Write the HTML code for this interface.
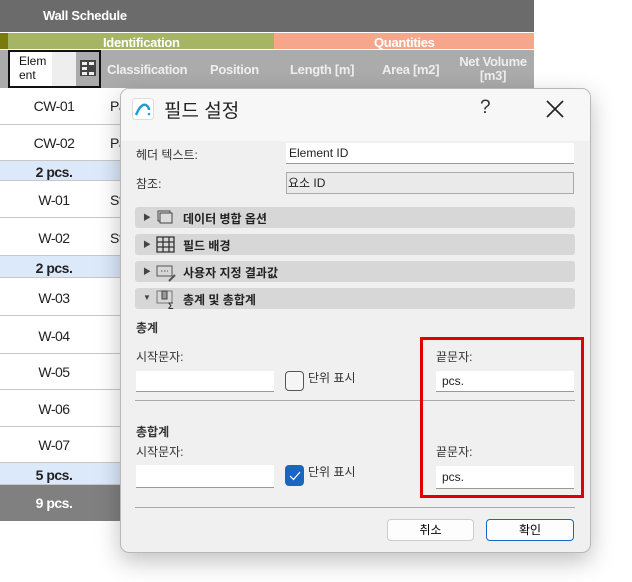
<!DOCTYPE html><html><head><meta charset="utf-8"><style>
*{box-sizing:border-box;margin:0;padding:0}
body{width:632px;height:582px;background:#fff;position:relative;overflow:hidden;font-family:"Liberation Sans","Noto Sans CJK KR",sans-serif}
.a{position:absolute}
.t{font-family:"Liberation Sans",sans-serif;font-weight:bold;color:#fff;font-size:13px;letter-spacing:-0.3px}
.row{position:absolute;left:0;width:534px;border-bottom:1px solid #c8c8c8;font-size:14px;color:#222}
.row span{position:absolute;left:0;width:108px;text-align:center;letter-spacing:-0.5px}
.sum{background:linear-gradient(90deg,#dbe9fb,#dbe9fb 60%,#b9cde6);font-weight:bold}
.lbl{position:absolute;font-size:12px;color:#333}
.inp{position:absolute;background:#fff;border-bottom:1px solid #999;font-size:12px;padding-left:6px;color:#222}
.bar{position:absolute;left:135px;width:440px;height:21px;background:#d7d7d7;border-radius:3px;font-size:12px;font-weight:bold;color:#222}
.bar .tri{position:absolute;left:8px;top:5px;font-size:8px;color:#444}
.bar .tx{position:absolute;left:48px;top:3px}
</style></head><body>
<div class="a" style="left:0;top:0;width:534px;height:32px;background:#6b6b6b"></div>
<div class="a t" style="left:43px;top:8px">Wall Schedule</div>
<div class="a" style="left:0;top:33px;width:8px;height:16px;background:#7a7a10"></div>
<div class="a" style="left:8px;top:33px;width:266px;height:16px;background:#a5b565"></div>
<div class="a" style="left:274px;top:33px;width:260px;height:16px;background:#f6a68a"></div>
<div class="a t" style="left:103px;top:35px">Identification</div>
<div class="a t" style="left:374px;top:35px">Quantities</div>
<div class="a" style="left:0;top:50px;width:534px;height:38px;background:#ababab"></div>
<div class="a" style="left:8px;top:50px;width:93px;height:38px;border:2px solid #111;background:#ababab"></div>
<div class="a" style="left:10px;top:52px;width:66px;height:34px;background:#fff"></div>
<div class="a" style="left:52px;top:52px;width:24px;height:34px;background:#eee"></div>
<div class="a" style="left:19px;top:54px;font-size:12px;line-height:14px;color:#111">Elem<br>ent</div>
<svg class="a" style="left:80px;top:60px" width="16" height="16"><rect x="0" y="0" width="16" height="16" fill="#444"/><rect x="2" y="2" width="5" height="3" fill="#eee"/><rect x="9" y="2" width="5" height="3" fill="#eee"/><rect x="2" y="7" width="5" height="3" fill="#eee"/><rect x="2" y="12" width="5" height="3" fill="#eee"/><rect x="9" y="12" width="5" height="3" fill="#eee"/></svg>
<div class="a t" style="left:107px;top:62px;color:#eee">Classification</div>
<div class="a t" style="left:210px;top:62px;color:#eee">Position</div>
<div class="a t" style="left:290px;top:62px;color:#eee">Length [m]</div>
<div class="a t" style="left:382px;top:62px;color:#eee">Area [m2]</div>
<div class="a t" style="left:458px;top:55px;color:#eee;text-align:center;line-height:14px;width:70px">Net Volume<br>[m3]</div>
<div class="row" style="top:88px;height:37px"><span style="top:10px">CW-01</span><span style="left:110px;top:10px;width:auto">Pa</span></div>
<div class="row" style="top:125px;height:36px"><span style="top:10px">CW-02</span><span style="left:110px;top:10px;width:auto">Pa</span></div>
<div class="row sum" style="top:161px;height:20px"><span style="top:3px">2 pcs.</span></div>
<div class="row" style="top:181px;height:37px"><span style="top:11px">W-01</span><span style="left:110px;top:11px;width:auto">St</span></div>
<div class="row" style="top:218px;height:38px"><span style="top:12px">W-02</span><span style="left:110px;top:12px;width:auto">St</span></div>
<div class="row sum" style="top:256px;height:22px"><span style="top:4px">2 pcs.</span></div>
<div class="row" style="top:278px;height:38px"><span style="top:12px">W-03</span></div>
<div class="row" style="top:316px;height:38px"><span style="top:12px">W-04</span></div>
<div class="row" style="top:354px;height:36px"><span style="top:10px">W-05</span></div>
<div class="row" style="top:390px;height:37px"><span style="top:11px">W-06</span></div>
<div class="row" style="top:427px;height:36px"><span style="top:10px">W-07</span></div>
<div class="row sum" style="top:463px;height:22px"><span style="top:4px">5 pcs.</span></div>
<div class="row" style="top:485px;height:36px;background:#808080;color:#fff;font-weight:bold;border:none"><span style="top:10px">9 pcs.</span></div>

<div class="a" style="left:120px;top:88px;width:471px;height:465px;background:#f0f0f0;border:1px solid #b8b8b8;border-radius:9px;box-shadow:0 8px 24px rgba(0,0,0,.25);overflow:hidden">
<div class="a" style="left:0;top:0;width:100%;height:52px;background:#f7f7f7"></div>
</div>
<svg class="a" style="left:132px;top:98px" width="22" height="22" viewBox="0 0 22 22"><rect x="0.5" y="0.5" width="21" height="21" rx="3" fill="#fff" stroke="#ddd"/><path d="M4 17 Q9 5 14 7 Q17 9 17 12" fill="none" stroke="#1aa0d8" stroke-width="2.5"/><circle cx="17" cy="16" r="1.3" fill="#1aa0d8"/></svg>
<div class="a" style="left:164px;top:96px;font-size:19px;color:#222">필드 설정</div>
<div class="a" style="left:480px;top:97px;font-size:19px;color:#333">?</div>
<svg class="a" style="left:546px;top:100px" width="18" height="18"><path d="M1 1L17 17M17 1L1 17" stroke="#222" stroke-width="1.6"/></svg>
<div class="lbl" style="left:136px;top:146px">헤더 텍스트:</div>
<div class="inp" style="left:286px;top:143px;width:288px;height:21px;line-height:20px;padding-left:3px">Element ID</div>
<div class="lbl" style="left:136px;top:175px">참조:</div>
<div class="inp" style="left:286px;top:172px;width:288px;height:22px;line-height:20px;background:#eaeaea;border:1px solid #aaa;padding-left:1px">요소 ID</div>
<div class="bar" style="top:207px"><span class="tri">▶</span><svg class="a" style="left:22px;top:3px" width="16" height="15"><rect x="1" y="1" width="12" height="10" fill="none" stroke="#444"/><rect x="3" y="3" width="12" height="10" fill="#ddd" stroke="#444"/></svg><span class="tx">데이터 병합 옵션</span></div>
<div class="bar" style="top:234px"><span class="tri">▶</span><svg class="a" style="left:21px;top:2px" width="19" height="17"><path d="M1 1H18V16H1ZM1 6H18M1 11H18M7 1V16M13 1V16" fill="none" stroke="#333" stroke-width="1.3"/></svg><span class="tx">필드 배경</span></div>
<div class="bar" style="top:261px"><span class="tri">▶</span><svg class="a" style="left:21px;top:3px" width="20" height="18"><rect x="1" y="2" width="15" height="10" fill="none" stroke="#555"/><path d="M5 7h7" stroke="#555" stroke-dasharray="1.5 1.5"/><path d="M13 17l6-6" stroke="#555" stroke-width="2"/></svg><span class="tx">사용자 지정 결과값</span></div>
<div class="bar" style="top:288px"><span class="tri">▼</span><svg class="a" style="left:21px;top:2px" width="20" height="19"><rect x="1" y="1" width="15" height="12" fill="none" stroke="#777"/><rect x="6" y="1" width="5" height="8" fill="#999" stroke="#444"/><text x="12" y="19" font-size="9" fill="#333">Σ</text></svg><span class="tx">총계 및 총합계</span></div>
<div class="lbl" style="left:136px;top:319px;font-weight:bold">총계</div>
<div class="lbl" style="left:136px;top:348px">시작문자:</div>
<div class="inp" style="left:136px;top:371px;width:138px;height:21px"></div>
<div class="a" style="left:285px;top:371px;width:19px;height:20px;border:1px solid #555;border-radius:4px;background:#f5f5f5"></div>
<div class="lbl" style="left:308px;top:369px">단위 표시</div>
<div class="lbl" style="left:436px;top:348px">끝문자:</div>
<div class="inp" style="left:436px;top:371px;width:138px;height:21px;line-height:20px">pcs.</div>
<div class="a" style="left:135px;top:400px;width:440px;height:1px;background:#aaa"></div>
<div class="lbl" style="left:136px;top:423px;font-weight:bold">총합계</div>
<div class="lbl" style="left:136px;top:443px">시작문자:</div>
<div class="inp" style="left:136px;top:465px;width:138px;height:23px"></div>
<div class="a" style="left:285px;top:465px;width:19px;height:21px;border-radius:4px;background:#1a65c0"></div>
<svg class="a" style="left:289px;top:471px" width="12" height="10"><path d="M1 5l3.5 3.5L11 1" fill="none" stroke="#fff" stroke-width="1.2"/></svg>
<div class="lbl" style="left:308px;top:463px">단위 표시</div>
<div class="lbl" style="left:436px;top:443px">끝문자:</div>
<div class="inp" style="left:436px;top:466px;width:138px;height:23px;line-height:22px">pcs.</div>
<div class="a" style="left:420px;top:337px;width:164px;height:161px;border:3px solid #e00000"></div>
<div class="a" style="left:135px;top:507px;width:440px;height:1px;background:#aaa"></div>
<div class="a" style="left:387px;top:519px;width:87px;height:22px;background:#fdfdfd;border:1px solid #ccc;border-radius:4px;font-size:12px;text-align:center;line-height:20px">취소</div>
<div class="a" style="left:486px;top:519px;width:88px;height:22px;background:#fdfdfd;border:1px solid #1a65c0;border-radius:4px;font-size:12px;text-align:center;line-height:20px">확인</div>
</body></html>
